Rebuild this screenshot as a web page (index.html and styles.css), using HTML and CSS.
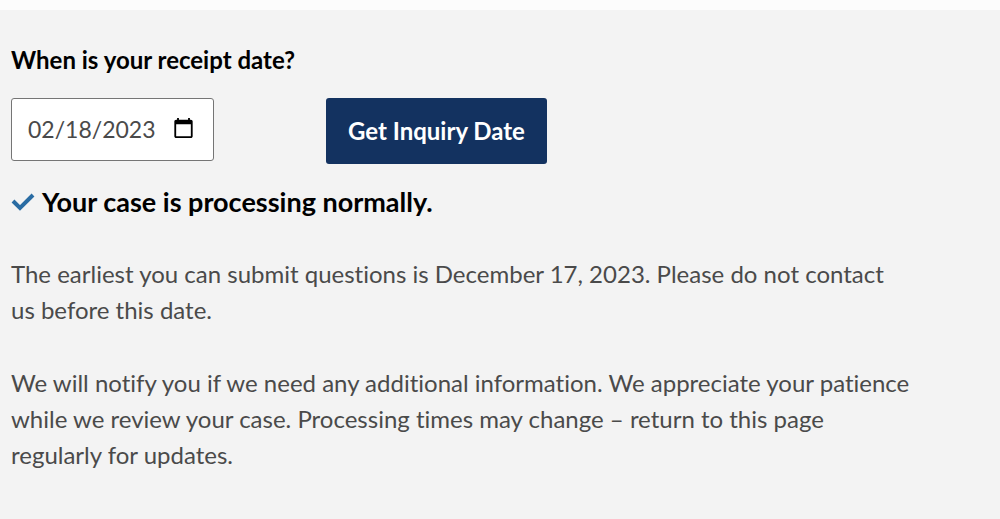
FILE: index.html
```html
<!DOCTYPE html>
<html lang="en-US">
  <head>
    <meta charset="UTF-8" />
    <meta name="viewport" content="width=device-width, initial-scale=1">
    <title>Case Processing Times</title>
    <link rel="stylesheet" href="styles.css">
  </head>
  <body>
    <main class="inquiry">
      <form class="receipt-form">
        <label class="receipt-label" for="receipt-date">When is your receipt date?</label>
        <div class="controls">
          <input class="date-input" id="receipt-date" type="date" value="2023-02-18">
          <button class="submit" type="button">Get Inquiry Date</button>
        </div>
      </form>
      <h2 class="status">
        <svg class="check" viewBox="0 0 24 18" aria-hidden="true">
          <path fill="none" stroke="#2a6ca3" stroke-width="4" d="M2 8l7 7L22 2"/>
        </svg>
        Your case is processing normally.
      </h2>
      <p class="message">The earliest you can submit questions is December 17, 2023. Please do not contact us before this date.</p>
      <p class="message">We will notify you if we need any additional information. We appreciate your patience while we review your case. Processing times may change – return to this page regularly for updates.</p>
    </main>
  </body>
</html>
```
FILE: styles.css
```css
* {
  box-sizing: border-box;
}
html {
  background: #f3f3f3;
}
body {
  margin: 0;
  border-top: 10px solid #fcfcfc;
  font-family: Lato, sans-serif;
  font-variant-ligatures: none;
  color: #4a4a4a;
}
.inquiry {
  max-width: 921px;
  padding: 34px 11px 0;
}
.receipt-label {
  display: block;
  color: #000;
  font-size: 24px;
  font-weight: 700;
  line-height: 32px;
}
.controls {
  display: flex;
  align-items: flex-start;
  gap: 112px;
  margin-top: 22px;
}
.date-input {
  width: 203px;
  height: 63px;
  padding: 0 18px 2px 16px;
  background: #fff;
  border: 1px solid #757575;
  border-radius: 3px;
  color: #4a4a4a;
  font: 23px Lato, sans-serif;
}
.date-input::-webkit-datetime-edit,
.date-input::-webkit-datetime-edit-fields-wrapper {
  padding: 0;
}
.date-input::-webkit-datetime-edit-month-field,
.date-input::-webkit-datetime-edit-day-field,
.date-input::-webkit-datetime-edit-year-field {
  padding: 0;
}
.date-input::-webkit-calendar-picker-indicator {
  margin: 0;
  padding: 0;
}
.submit {
  height: 66px;
  padding: 0 22px 2px;
  border: 0;
  border-radius: 3px;
  background: #133260;
  color: #fff;
  font: 700 24px Lato, sans-serif;
}
.status {
  display: flex;
  align-items: center;
  gap: 7px;
  margin: 20px 0 36px;
  color: #000;
  font-size: 27px;
  font-weight: 700;
  line-height: 36px;
}
.check {
  width: 24px;
  height: 18px;
}
.message {
  margin: 0 0 37px;
  font-size: 24px;
  line-height: 36px;
}
```
